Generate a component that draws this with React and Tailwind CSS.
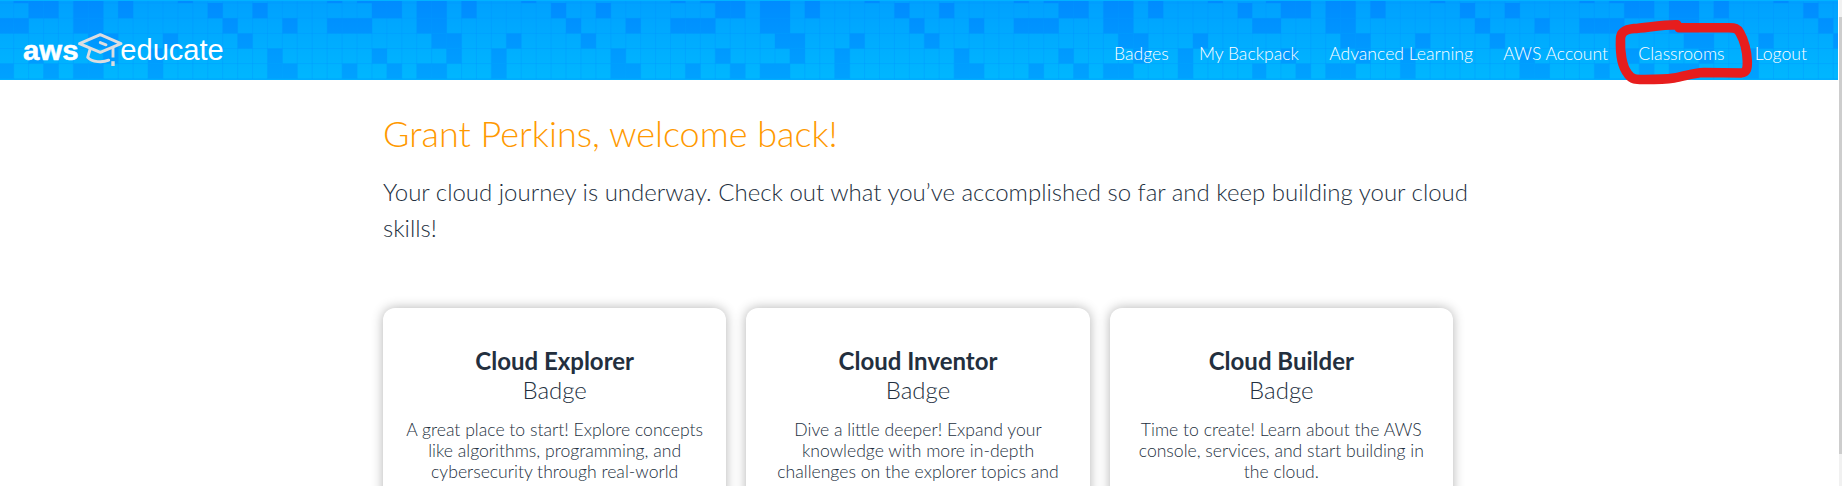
const PITCH_X = 14.928;
const TILE_COLS = 23;
const ROWS = [
  { y: 1, h: 2, cols: [0, 1, 3, 4, 6, 10, 20, 22] },
  { y: 3, h: 15.2, cols: [0, 1, 3, 4, 6, 12, 15] },
  { y: 18.2, h: 15.2, cols: [3, 4, 13, 17, 20, 21, 22] },
  { y: 33.4, h: 15.1, cols: [4, 5, 9, 14] },
  { y: 48.5, h: 15.1, cols: [0, 5, 8, 16] },
  { y: 63.6, h: 15.1, cols: [1, 3, 4, 8, 16, 17, 21] },
];
const LINES_Y = [3, 18.2, 33.4, 48.5, 63.6, 78.7];

function Mosaic({ start, end }) {
  const origin = start + 28.6;
  const count = Math.ceil((end - start) / PITCH_X) + 1;
  const ks = Array.from({ length: count }, (_, i) => i - 2);
  const id = `seg${start}`;
  return (
    <g clipPath={`url(#${id})`}>
      <clipPath id={id}>
        <rect x={start} y="0" width={end - start} height="80" />
      </clipPath>
      {ks.map((k) => (
        <rect key={k} x={origin + k * PITCH_X - 0.5} y="1" width="1" height="78" fill="#0090ff" opacity="0.28" />
      ))}
      {ROWS.map((row) =>
        ks
          .filter((k) => row.cols.includes((k + TILE_COLS) % TILE_COLS))
          .map((k) => (
            <rect key={`${row.y}-${k}`} x={origin + k * PITCH_X} y={row.y} width={PITCH_X + 0.1} height={row.h + 0.1} fill="url(#dark)" />
          ))
      )}
    </g>
  );
}

function HeaderPattern() {
  return (
    <svg className="absolute inset-0 h-20 w-full" width="1838" height="80" aria-hidden="true">
      <defs>
        <linearGradient id="sky" gradientUnits="userSpaceOnUse" x1="0" y1="0" x2="0" y2="80">
          <stop offset="0" stopColor="#00a0ff" />
          <stop offset="1" stopColor="#00b7ff" />
        </linearGradient>
        <linearGradient id="dark" gradientUnits="userSpaceOnUse" x1="0" y1="0" x2="0" y2="80">
          <stop offset="0" stopColor="#008bff" />
          <stop offset="1" stopColor="#00a2ff" />
        </linearGradient>
      </defs>
      <rect width="1838" height="80" fill="url(#sky)" />
      {LINES_Y.map((y) => (
        <rect key={y} x="0" y={y - 0.5} width="1838" height="1" fill="#0090ff" opacity="0.28" />
      ))}
      <Mosaic start={0} end={1252.3} />
      <Mosaic start={1252.3} end={1838} />
      <rect width="1838" height="1" fill="#00b2ff" />
      <rect y="79" width="1838" height="1" fill="#00adff" />
    </svg>
  );
}

function Logo() {
  return (
    <svg className="relative ml-[22px] mt-[30px] h-[40px] w-[206px]" viewBox="22 30 206 40">
      <text x="23" y="60" textLength="55.5" lengthAdjust="spacingAndGlyphs" fill="#fff" stroke="#fff" strokeWidth="0.5" className="font-['Liberation_Sans',sans-serif] text-[28px] font-bold">aws</text>
      <text x="120.3" y="60" textLength="103.5" lengthAdjust="spacingAndGlyphs" fill="#fff" className="font-['Liberation_Sans',sans-serif] text-[29.5px]">educate</text>
      <g fill="none" stroke="#dcdde0" strokeWidth="2.9" strokeLinejoin="round" strokeLinecap="round">
        <path d="M79.5 43.7 L100.3 34.6 L121 43.7 L100.3 52.3 Z" />
        <path d="M100.3 42.6 L106 44.8" />
        <path d="M90 49.5 L87.7 57.3 C92 62.5 103 62.7 108.7 60.2" />
        <path d="M113 48 L113 57.5" strokeLinecap="butt" />
        <path d="M113 61.2 L113 66" strokeLinecap="butt" strokeWidth="3.4" />
      </g>
    </svg>
  );
}

const NAV = ["Badges", "My Backpack", "Advanced Learning", "AWS Account", "Classrooms", "Logout"];

const CARDS = [
  { name: "Cloud Explorer", lines: ["A great place to start! Explore concepts", "like algorithms, programming, and", "cybersecurity through real-world"] },
  { name: "Cloud Inventor", lines: ["Dive a little deeper! Expand your", "knowledge with more in-depth", "challenges on the explorer topics and"] },
  { name: "Cloud Builder", lines: ["Time to create! Learn about the AWS", "console, services, and start building in", "the cloud."] },
];

function Card({ name, lines }) {
  return (
    <section className="h-[300px] rounded-xl bg-white pt-[38px] text-center text-[#232f3e] shadow-[0_0_12px_rgba(0,0,0,0.3)]">
      <h2 className="text-2xl leading-[30px] font-bold">{name}</h2>
      <p className="-mt-px text-2xl leading-[30px] font-light">Badge</p>
      <p className="mt-[14px] text-[17.6px] leading-[21.12px] font-light">
        {lines.map((line) => (
          <span key={line} className="block whitespace-nowrap">{line}</span>
        ))}
      </p>
    </section>
  );
}

export default function App() {
  return (
    <div className="flex h-[486px] w-[1842px] overflow-hidden bg-white font-['Lato',sans-serif]">
      <div className="w-[1839px]">
        <header className="relative flex h-20 w-[1838px] justify-between">
          <HeaderPattern />
          <Logo />
          <nav className="relative mt-[43px] mr-[31px] flex gap-[30.2px] text-[17.6px] leading-[22px] font-light text-white">
            {NAV.map((item) => (
              <a key={item} className="whitespace-nowrap">{item}</a>
            ))}
          </nav>
          <svg className="absolute top-0 left-[1600px] h-[100px] w-[170px]" viewBox="1600 0 170 100" fill="none" stroke="#e71d1d" strokeWidth="9.5" strokeLinecap="round" strokeLinejoin="round">
            <path d="M1677 24.7 C1662 24.5 1645 28 1634 28.5 C1624 29.5 1620.5 33 1620.5 39 C1620 52 1622 67 1628 74 C1632 80 1637 79.5 1645 79.5 C1655 79.5 1664 79.5 1674 78 C1684 76.5 1692 73 1704 72.5 L1741 73 C1747 72.5 1747.5 68 1747.3 61 C1747 52 1744 40 1740 33 C1737.5 28.5 1735 27.8 1729 27.8 L1679 27.8" />
          </svg>
        </header>
        <main className="ml-[383px] w-[1090px]">
          <h1 className="pt-[31px] text-[36px] leading-[44px] font-light text-[#ff9900]">Grant Perkins, welcome back!</h1>
          <p className="mt-[19px] text-2xl leading-9 font-light text-[#232f3e]">
            Your cloud journey is underway. Check out what you’ve accomplished so far and keep building your cloud skills!
          </p>
          <div className="mt-[62px] grid w-[1070px] grid-cols-3 gap-5">
            {CARDS.map((card) => (
              <Card key={card.name} {...card} />
            ))}
          </div>
        </main>
      </div>
      <div className="w-[3px] bg-[#f1f1f1] pt-[17px]">
        <div className="h-[437px] bg-[#cdcdcd]" />
      </div>
    </div>
  );
}
